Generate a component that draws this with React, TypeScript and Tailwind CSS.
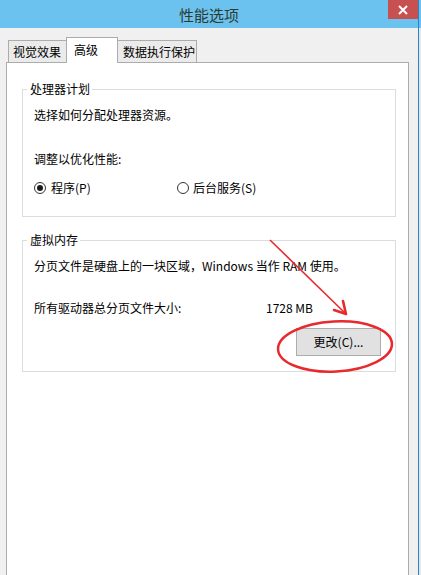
export default function App() {
  return (
    <div className="relative flex w-[421px] h-[575px] overflow-hidden bg-[#f0f0f0] font-['Noto_Sans_CJK_SC','Noto_Sans',sans-serif] text-[#000]">
      <div className="flex flex-col w-[418px]">
        <div className="relative h-[28px] bg-[#6bc2ef] flex items-center justify-center">
          <span className="text-[15px] leading-none text-[#2d3a2d]">性能选项</span>
          <div className="absolute right-0 top-0 w-[30px] h-[19px] bg-[#c75050] flex items-center justify-center">
            <svg width="10" height="10" viewBox="0 0 10 10">
              <path d="M1 1L9 9M9 1L1 9" stroke="#fff" strokeWidth="2" />
            </svg>
          </div>
        </div>
        <div className="flex-1 flex flex-col bg-[#f0f0f0] pt-[9px] pl-[6px] pr-[9px]">
          <div className="relative z-10 flex items-end h-[25px] pl-[2px] text-[12px] whitespace-nowrap">
            <div className="h-[22px] w-[58px] flex items-center pl-[4px] bg-[#ebebeb] border-l border-t border-[#acacac]">
              视觉效果
            </div>
            <div className="h-[26px] w-[52px] -mb-px pt-[4px] pl-[7px] leading-[16px] bg-white border-l border-t border-r border-[#acacac]">
              高级
            </div>
            <div className="h-[22px] w-[79px] flex items-center pl-[5px] bg-[#ebebeb] border-t border-r border-[#acacac]">
              数据执行保护
            </div>
          </div>
          <div className="flex-1 flex flex-col bg-white border-l border-t border-r border-[#acacac] text-[12px] leading-[16px]">
            <div className="mt-[26px] ml-[15px] w-[374px] border border-[#dcdcdc] flex flex-col pb-[20px]">
              <div className="-mt-[9px] ml-[4px] pl-[3px] pr-[2px] w-fit bg-white h-[16px]">处理器计划</div>
              <div className="pl-[11px] flex flex-col">
                <div className="mt-[10px]">选择如何分配处理器资源。</div>
                <div className="mt-[28px]">调整以优化性能:</div>
                <div className="mt-[13px] flex items-center h-[16px]">
                  <div className="w-[143px] flex items-center">
                    <span className="w-[12px] h-[12px] rounded-full border border-[#333] bg-white flex items-center justify-center">
                      <span className="w-[6px] h-[6px] rounded-full bg-[#1a1a1a]" />
                    </span>
                    <span className="ml-[5px]">程序(P)</span>
                  </div>
                  <div className="flex items-center">
                    <span className="w-[12px] h-[12px] rounded-full border border-[#333] bg-white" />
                    <span className="ml-[4px]">后台服务(S)</span>
                  </div>
                </div>
              </div>
            </div>
            <div className="mt-[23px] ml-[15px] w-[374px] border border-[#dcdcdc] flex flex-col pb-[15px]">
              <div className="-mt-[9px] ml-[4px] pl-[3px] pr-[2px] w-fit bg-white h-[16px]">虚拟内存</div>
              <div className="pl-[11px] flex flex-col">
                <div className="mt-[10px]">分页文件是硬盘上的一块区域，Windows 当作 RAM 使用。</div>
                <div className="mt-[26px] flex">
                  <span className="w-[232px]">所有驱动器总分页文件大小:</span>
                  <span>1728 MB</span>
                </div>
                <div className="mt-[12px] flex justify-end pr-[14px]">
                  <div className="w-[85px] h-[28px] border border-[#adadad] bg-[#e1e1e1] flex items-center justify-center">
                    更改(C)...
                  </div>
                </div>
              </div>
            </div>
          </div>
        </div>
      </div>
      <div className="w-[1px] bg-[#2b84c6]" />
      <div className="w-[2px] flex flex-col">
        <div className="h-[28px] bg-[#6bc2ef]" />
        <div className="flex-1 bg-[#e6e6e6]" />
      </div>
      <svg className="absolute left-0 top-0 pointer-events-none" width="421" height="575" viewBox="0 0 421 575">
        <line x1="270" y1="240" x2="345" y2="313" stroke="#e8292e" strokeWidth="1.6" />
        <polyline points="334,310 346,314 343,301" stroke="#e8292e" strokeWidth="2.6" fill="none" strokeLinejoin="round" strokeLinecap="round" />
        <ellipse cx="335" cy="346.5" rx="57" ry="25" transform="rotate(-3 335 346.5)" stroke="#e8292e" strokeWidth="2.5" fill="none" />
      </svg>
    </div>
  );
}
